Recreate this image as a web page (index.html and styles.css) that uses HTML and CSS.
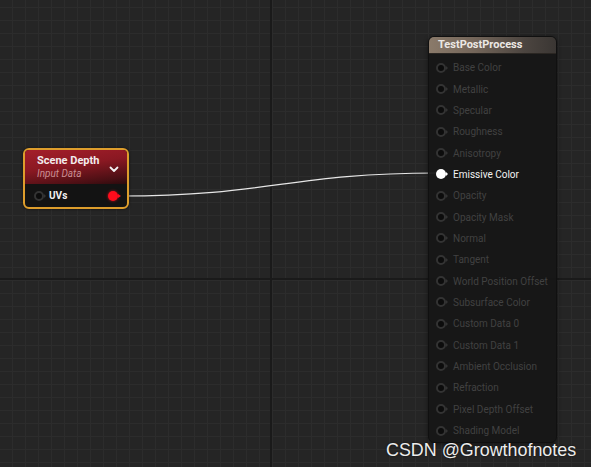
FILE: index.html
```html
<!DOCTYPE html>
<html>
<head>
<meta charset="utf-8">
<link rel="stylesheet" href="styles.css">
</head>
<body>
<div class="canvas">
  <svg class="wire" width="591" height="467" viewBox="0 0 591 467">
    <path d="M120 196 C 270 196, 290 173, 437 173" fill="none" stroke="#e6e6e6" stroke-width="1.2"/>
  </svg>

  <div class="node node-sd">
    <div class="sd-header">
      <div class="sd-titles">
        <div class="sd-title">Scene Depth</div>
        <div class="sd-sub">Input Data</div>
      </div>
      <svg class="chev" width="10" height="7" viewBox="0 0 10 7"><path d="M1.5 1.5 L5 5 L8.5 1.5" fill="none" stroke="#f2f2f2" stroke-width="1.8" stroke-linecap="round" stroke-linejoin="round"/></svg>
    </div>
    <div class="sd-body">
      <span class="pin pin-off"><i class="dot"></i><i class="tri"></i></span>
      <span class="sd-label">UVs</span>
      <span class="pin pin-red"><i class="dot"></i><i class="tri"></i></span>
    </div>
  </div>

  <div class="node node-mat">
    <div class="mat-header">TestPostProcess</div>
    <div class="mat-body">
      <div class="row"><span class="pin pin-off"><i class="dot"></i><i class="tri"></i></span><span class="lbl">Base Color</span></div>
      <div class="row"><span class="pin pin-off"><i class="dot"></i><i class="tri"></i></span><span class="lbl">Metallic</span></div>
      <div class="row"><span class="pin pin-off"><i class="dot"></i><i class="tri"></i></span><span class="lbl">Specular</span></div>
      <div class="row"><span class="pin pin-off"><i class="dot"></i><i class="tri"></i></span><span class="lbl">Roughness</span></div>
      <div class="row"><span class="pin pin-off"><i class="dot"></i><i class="tri"></i></span><span class="lbl">Anisotropy</span></div>
      <div class="row row-on"><span class="pin pin-on"><i class="dot"></i><i class="tri"></i></span><span class="lbl">Emissive Color</span></div>
      <div class="row"><span class="pin pin-off"><i class="dot"></i><i class="tri"></i></span><span class="lbl">Opacity</span></div>
      <div class="row"><span class="pin pin-off"><i class="dot"></i><i class="tri"></i></span><span class="lbl">Opacity Mask</span></div>
      <div class="row"><span class="pin pin-off"><i class="dot"></i><i class="tri"></i></span><span class="lbl">Normal</span></div>
      <div class="row"><span class="pin pin-off"><i class="dot"></i><i class="tri"></i></span><span class="lbl">Tangent</span></div>
      <div class="row"><span class="pin pin-off"><i class="dot"></i><i class="tri"></i></span><span class="lbl">World Position Offset</span></div>
      <div class="row"><span class="pin pin-off"><i class="dot"></i><i class="tri"></i></span><span class="lbl">Subsurface Color</span></div>
      <div class="row"><span class="pin pin-off"><i class="dot"></i><i class="tri"></i></span><span class="lbl">Custom Data 0</span></div>
      <div class="row"><span class="pin pin-off"><i class="dot"></i><i class="tri"></i></span><span class="lbl">Custom Data 1</span></div>
      <div class="row"><span class="pin pin-off"><i class="dot"></i><i class="tri"></i></span><span class="lbl">Ambient Occlusion</span></div>
      <div class="row"><span class="pin pin-off"><i class="dot"></i><i class="tri"></i></span><span class="lbl">Refraction</span></div>
      <div class="row"><span class="pin pin-off"><i class="dot"></i><i class="tri"></i></span><span class="lbl">Pixel Depth Offset</span></div>
      <div class="row"><span class="pin pin-off"><i class="dot"></i><i class="tri"></i></span><span class="lbl">Shading Model</span></div>
    </div>
  </div>

  <div class="watermark">CSDN @Growthofnotes</div>
</div>
</body>
</html>
```

FILE: styles.css
```css
html, body {
  margin: 0;
  padding: 0;
  background: #262626;
}

.canvas {
  position: relative;
  width: 591px;
  height: 467px;
  overflow: hidden;
  font-family: Roboto, "Liberation Sans", sans-serif;
  background-color: #252525;
  background-image:
    linear-gradient(#1a1a1a, #1a1a1a),
    linear-gradient(#1a1a1a, #1a1a1a),
    linear-gradient(90deg, #2c2c2c 1px, transparent 1px),
    linear-gradient(#2c2c2c 1px, transparent 1px);
  background-repeat: no-repeat, no-repeat, repeat, repeat;
  background-size: 100% 2px, 2px 100%, 13px 13px, 13px 13px;
  background-position: 0 278px, 270px 0, 12px 0, 0 7px;
}

.wire {
  position: absolute;
  left: 0;
  top: 0;
}

.node {
  position: absolute;
  box-sizing: border-box;
}

/* Scene Depth node */
.node-sd {
  left: 23px;
  top: 148px;
  width: 106px;
  border: 2px solid #dd9d2c;
  border-radius: 6px;
  background: #131313;
  overflow: hidden;
  box-shadow: 0 0 3px rgba(0, 0, 0, 0.6);
}

.sd-header {
  display: flex;
  align-items: center;
  justify-content: space-between;
  height: 34px;
  padding: 0 8px 0 12px;
  background: linear-gradient(172deg, #a41e2a 0%, #8a1822 45%, #4a0f14 85%, #2a0b0d 100%);
  box-sizing: border-box;
}

.sd-titles {
  display: flex;
  flex-direction: column;
  padding-top: 1px;
}

.sd-title {
  font-size: 11px;
  font-weight: bold;
  color: #f2ecec;
  line-height: 13px;
}

.sd-sub {
  font-size: 10px;
  font-style: italic;
  color: #c98e92;
  line-height: 14px;
}

.chev {
  margin-top: 4px;
}

.sd-body {
  display: flex;
  align-items: center;
  height: 23px;
  padding: 0 6px 0 9px;
}

.sd-label {
  flex: 1;
  margin-left: 3px;
  font-size: 10px;
  font-weight: bold;
  color: #f0f0f0;
}

/* pins */
.pin {
  display: inline-flex;
  align-items: center;
  flex: none;
}

.pin .dot {
  display: block;
  box-sizing: border-box;
  width: 10px;
  height: 10px;
  border-radius: 50%;
}

.pin .tri {
  display: block;
  width: 0;
  height: 0;
  border-top: 2px solid transparent;
  border-bottom: 2px solid transparent;
  border-left: 2px solid #333333;
}

.pin-off .dot {
  border: 2px solid #333333;
  background: #0c0c0c;
}

.pin-on .dot {
  background: #ffffff;
}

.pin-on .tri {
  border-left-color: #ffffff;
}

.pin-red .dot {
  width: 10px;
  height: 10px;
  background: #ff0c1c;
  box-shadow: 0 0 3px rgba(255, 20, 30, 0.7);
}

.pin-red .tri {
  border-left-width: 3px;
  border-left-color: #ff0c1c;
}

/* Material result node */
.node-mat {
  left: 428px;
  top: 36px;
  width: 129px;
  height: 407px;
  border: 1px solid #101010;
  border-radius: 6px;
  background: rgba(22, 22, 22, 0.92);
  overflow: hidden;
  box-shadow: 0 1px 4px rgba(0, 0, 0, 0.5);
}

.mat-header {
  height: 16px;
  padding-left: 9px;
  font-size: 11px;
  font-weight: bold;
  line-height: 16px;
  color: #ece8e4;
  background: linear-gradient(90deg, #8a7a6a 0%, #74665a 35%, #4c4540 75%, #3a3633 100%);
  border-bottom: 1px solid #2a2622;
}

.mat-body {
  display: flex;
  flex-direction: column;
  padding-top: 3px;
}

.row {
  display: flex;
  align-items: center;
  height: 21.35px;
  padding-left: 7px;
  gap: 5px;
}

.lbl {
  font-size: 10px;
  color: #414141;
  white-space: nowrap;
}

.row-on .lbl {
  color: #f2f2f2;
}

.watermark {
  position: absolute;
  left: 386px;
  top: 440px;
  font-family: "Liberation Sans", Arial, sans-serif;
  font-size: 17.9px;
  line-height: 20px;
  color: #ececec;
  text-shadow: 0 0 2px rgba(0, 0, 0, 0.8);
  white-space: nowrap;
}
```
